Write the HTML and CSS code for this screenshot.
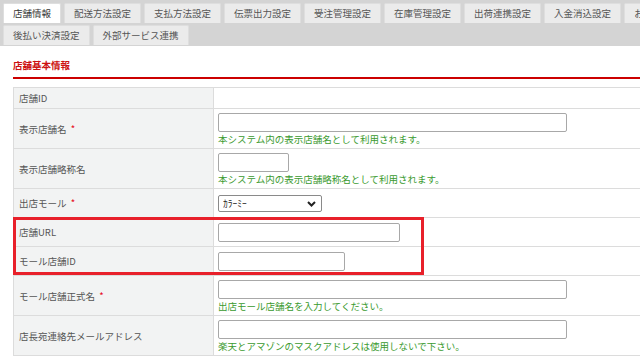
FILE: index.html
```html
<!DOCTYPE html>
<html lang="ja">
<head>
    <meta charset="UTF-8">
    <meta name="viewport" content="width=device-width, initial-scale=1.0">
    <title>店舗情報</title>
    <link rel="stylesheet" href="styles.css">
</head>
<body>
    <!-- Settings tabs -->
    <div class="tabbar">
        <ul class="tabs">
            <li class="tab active">店舗情報</li>
            <li class="tab">配送方法設定</li>
            <li class="tab">支払方法設定</li>
            <li class="tab">伝票出力設定</li>
            <li class="tab">受注管理設定</li>
            <li class="tab">在庫管理設定</li>
            <li class="tab">出荷連携設定</li>
            <li class="tab">入金消込設定</li>
            <li class="tab">お知らせ設定</li>
            <li class="tab">後払い決済設定</li>
            <li class="tab">外部サービス連携</li>
        </ul>
    </div>

    <section class="content">
        <h2 class="section-title">店舗基本情報</h2>

        <div class="form-wrap">
            <table class="form-table">
                <tr class="row-s">
                    <th>店舗ID</th>
                    <td></td>
                </tr>
                <tr class="row-l">
                    <th>表示店舗名 <span class="req">*</span></th>
                    <td>
                        <input type="text" class="field w-long">
                        <p class="hint">本システム内の表示店舗名として利用されます。</p>
                    </td>
                </tr>
                <tr class="row-l">
                    <th>表示店舗略称名</th>
                    <td>
                        <input type="text" class="field w-xs">
                        <p class="hint">本システム内の表示店舗略称名として利用されます。</p>
                    </td>
                </tr>
                <tr class="row-m">
                    <th>出店モール <span class="req">*</span></th>
                    <td>
                        <span class="select-box">
                            <select class="select">
                                <option>ｶﾗｰﾐｰ</option>
                            </select>
                            <svg class="chevron" width="9" height="6" viewBox="0 0 9 6">
                                <path d="M1 1 L4.5 4.5 L8 1" fill="none" stroke="#222" stroke-width="2"/>
                            </svg>
                        </span>
                    </td>
                </tr>
                <tr class="row-m">
                    <th>店舗URL</th>
                    <td><input type="text" class="field w-mid"></td>
                </tr>
                <tr class="row-m">
                    <th>モール店舗ID</th>
                    <td><input type="text" class="field w-short"></td>
                </tr>
                <tr class="row-l">
                    <th>モール店舗正式名 <span class="req">*</span></th>
                    <td>
                        <input type="text" class="field w-long">
                        <p class="hint">出店モール店舗名を入力してください。</p>
                    </td>
                </tr>
                <tr class="row-l">
                    <th>店長宛連絡先メールアドレス</th>
                    <td>
                        <input type="text" class="field w-long">
                        <p class="hint">楽天とアマゾンのマスクアドレスは使用しないで下さい。</p>
                    </td>
                </tr>
            </table>

            <!-- highlight around URL / ID rows -->
            <div class="highlight"></div>
        </div>
    </section>
</body>
</html>
```

FILE: styles.css
```css
body {
    margin: 0;
    background: #fff;
    color: #444;
    font-family: "Noto Sans CJK JP", "Noto Sans", sans-serif;
    font-size: 9.5px;
    overflow: hidden;
}

/* Tabs */
.tabbar {
    background: #d4d4d4;
    width: 720px;
    padding: 3px 0 1px 3px;
}

.tabs {
    list-style: none;
    margin: 0;
    padding: 0;
    display: flex;
    flex-wrap: wrap;
    gap: 2px 3px;
}

.tab {
    height: 19px;
    line-height: 19px;
    padding: 0 9px;
    background: #ebebeb;
    border: 1px solid #dedede;
    border-bottom: none;
    border-radius: 2px 2px 0 0;
    color: #555;
    white-space: nowrap;
}

.tab.active {
    background: #fff;
    color: #333;
}

/* Content */
.content {
    padding: 12px 0 0 13px;
}

.section-title {
    margin: 0 0 8px 0;
    width: 700px;
    font-size: 9.5px;
    line-height: 14px;
    color: #cc1111;
    padding-bottom: 5px;
    border-bottom: 2px solid #cc0000;
}

.form-wrap {
    position: relative;
    width: 700px;
}

.form-table {
    width: 700px;
    border-collapse: collapse;
    border: 1px solid #dcdcdc;
}

.form-table th,
.form-table td {
    border-top: 1px solid #dcdcdc;
    border-bottom: 1px solid #dcdcdc;
    vertical-align: middle;
    padding: 0 4px;
}

.form-table th {
    width: 190px;
    background: #f2f3f3;
    border-right: 1px solid #dcdcdc;
    text-align: left;
    font-weight: normal;
    color: #555;
    padding-left: 5px;
}

.row-s th, .row-s td { height: 20px; }
.row-m th, .row-m td { height: 28px; }
.row-l th, .row-l td { height: 39px; }

.req {
    color: #e60012;
    margin-left: 2px;
}

.field {
    display: block;
    box-sizing: border-box;
    height: 19px;
    margin: 0;
    border: 1px solid #a8a8a8;
    border-radius: 2px;
    background: #fff;
}

.w-long { width: 349px; }
.w-mid { width: 182px; }
.w-short { width: 127px; }
.w-xs { width: 71px; }

.hint {
    margin: 1px 0 0 0;
    line-height: 12px;
    color: #3a9a2e;
}

.select-box {
    position: relative;
    display: inline-block;
    vertical-align: middle;
}

.select {
    display: block;
    appearance: none;
    width: 104px;
    height: 17px;
    margin: 0;
    padding: 0 0 0 4px;
    border: 1px solid #8a8a8a;
    border-radius: 2px;
    background: #fff;
    font-family: "Noto Sans CJK JP", sans-serif;
    font-size: 9.5px;
    color: #222;
}

.chevron {
    position: absolute;
    right: 6px;
    top: 6px;
}

.highlight {
    position: absolute;
    left: 0;
    top: 130px;
    width: 411px;
    height: 58px;
    box-sizing: border-box;
    border: 3px solid #e8202a;
    pointer-events: none;
}
```
